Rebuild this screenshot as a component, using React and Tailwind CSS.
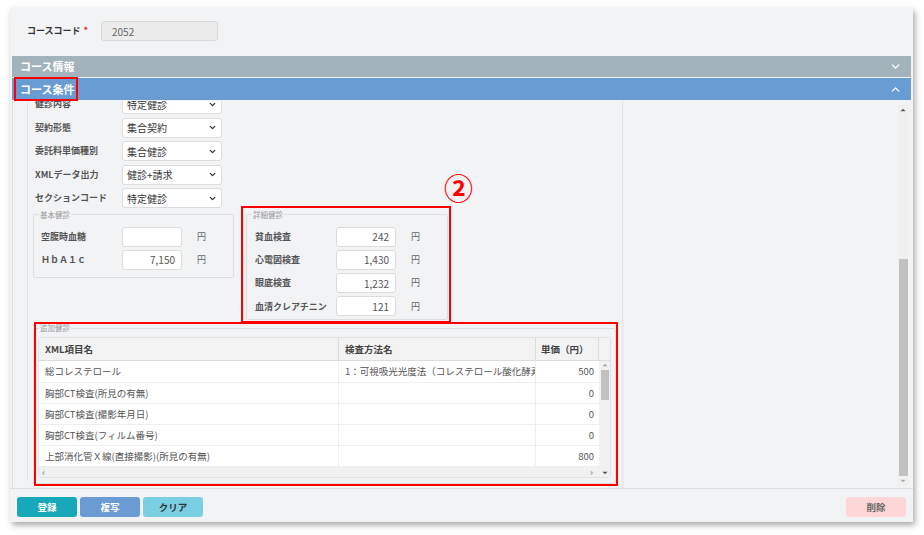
import { ChevronDown, ChevronUp } from "lucide-react";

const rows = [
  { name: "総コレステロール", method: "1：可視吸光光度法（コレステロール酸化酵素法）", price: "500" },
  { name: "胸部CT検査(所見の有無)", method: "", price: "0" },
  { name: "胸部CT検査(撮影年月日)", method: "", price: "0" },
  { name: "胸部CT検査(フィルム番号)", method: "", price: "0" },
  { name: "上部消化管Ｘ線(直接撮影)(所見の有無)", method: "", price: "800" },
];

function Tri({ dir = "up", className = "" }) {
  const pts = {
    up: "0,5 4,1 8,5",
    down: "0,1 4,5 8,1",
    left: "5,0 1,4 5,8",
    right: "1,0 5,4 1,8",
  }[dir];
  const vb = dir === "up" || dir === "down" ? "0 0 8 6" : "0 0 6 8";
  return (
    <svg viewBox={vb} className={className}>
      <polygon points={pts} fill="currentColor" />
    </svg>
  );
}

function Select({ value }) {
  return (
    <div className="flex h-[20px] w-[100px] items-center justify-between rounded-[3px] border border-[#dcdcdc] bg-white pl-[4px] pr-[4px] text-[10px] text-[#333]">
      <span>{value}</span>
      <ChevronDown size={9} strokeWidth={3.5} className="text-[#333]" />
    </div>
  );
}

function Money({ value }) {
  return (
    <div className="flex h-[20px] w-[60px] items-center justify-end rounded-[3px] border border-[#dcdcdc] bg-white pr-[6px] text-[10px] text-[#555]">
      {value}
    </div>
  );
}

function MoneyRow({ label, value }) {
  return (
    <div className="flex h-[20px] items-center">
      <div className="w-[81px] text-[9px] font-bold text-[#555]">{label}</div>
      <Money value={value} />
      <div className="ml-[15px] text-[9px] text-[#666]">円</div>
    </div>
  );
}

function Legend({ children }) {
  return <legend className="ml-[5px] px-[1px] text-[7.5px] leading-[10px] text-[#999]">{children}</legend>;
}

export default function App() {
  return (
    <div className="relative h-[535px] w-[924px] overflow-hidden bg-white font-['Noto_Sans_CJK_JP','Noto_Sans',sans-serif]">
      <div className="ml-[10px] mt-[8px] flex h-[514px] w-[903px] flex-col bg-[#f2f3f5] shadow-[2px_3px_6px_rgba(0,0,0,0.35)]">
        {/* コースコード */}
        <div className="flex h-[48px] items-start pl-[17px] pt-[13px]">
          <div className="flex h-[20px] w-[74px] items-center text-[9px] font-bold text-[#333]">
            コースコード<span className="ml-[3px] text-[#e02020]">*</span>
          </div>
          <div className="flex h-[20px] w-[117px] items-center rounded-[3px] border border-[#d8d8d8] bg-[#ececec] pl-[10px] text-[10px] text-[#666]">
            2052
          </div>
        </div>

        {/* section bars */}
        <div className="mx-[2px] flex h-[21px] items-center justify-between bg-[#a3b3bb] pl-[8px] pr-[9px] text-[11px] font-bold text-white">
          <span>コース情報</span>
          <ChevronDown size={13} strokeWidth={2.5} />
        </div>
        <div className="mx-[2px] mt-[1px] flex h-[22px] items-center justify-between bg-[#6a9cd4] pl-[8px] pr-[9px] text-[11px] font-bold text-white">
          <span>コース条件</span>
          <ChevronUp size={13} strokeWidth={2.5} />
        </div>

        {/* content */}
        <div className="mx-[2px] mt-[1px] flex h-[387px]">
          <div className="w-[611px] overflow-hidden border-l border-r border-[#e0e0e0] pl-[14px]">
            <div className="h-full border-l border-[#e3e3e3] pl-[5px]">
              <div className="-mt-[7px] flex flex-col gap-[3.5px]">
                {[
                  ["健診内容", "特定健診"],
                  ["契約形態", "集合契約"],
                  ["委託料単価種別", "集合健診"],
                  ["XMLデータ出力", "健診+請求"],
                  ["セクションコード", "特定健診"],
                ].map(([l, v]) => (
                  <div key={l} className="flex h-[20px] items-center">
                    <div className="w-[89px] pl-[2px] text-[9px] font-bold text-[#555]">{l}</div>
                    <Select value={v} />
                  </div>
                ))}
              </div>

              <div className="mt-[1.5px] flex items-start gap-[12px]">
                <fieldset className="w-[201px] rounded-[2px] border border-[#dedede] pb-[7px]">
                  <Legend>基本健診</Legend>
                  <div className="flex flex-col gap-[3px] pl-[7px] pt-[7px]">
                    <MoneyRow label="空腹時血糖" value="" />
                    <MoneyRow label="ＨｂＡ１ｃ" value="7,150" />
                  </div>
                </fieldset>
                <fieldset className="w-[202px] rounded-[2px] border border-[#dedede] pb-[3px]">
                  <Legend>詳細健診</Legend>
                  <div className="flex flex-col gap-[3.3px] pl-[8px] pt-[7px]">
                    <MoneyRow label="貧血検査" value="242" />
                    <MoneyRow label="心電図検査" value="1,430" />
                    <MoneyRow label="眼底検査" value="1,232" />
                    <MoneyRow label="血清クレアチニン" value="121" />
                  </div>
                </fieldset>
              </div>

              <fieldset className="mt-[3px] w-[581px] rounded-[2px] border border-[#dedede] pb-[5px]">
                <Legend>追加健診</Legend>
                <div className="mx-[4px] mt-[4px] flex h-[141px] flex-col overflow-hidden rounded-[3px] border border-[#e2e2e2] bg-white text-[9.5px] text-[#555]">
                  <div className="flex h-[23px] shrink-0 border-b border-[#dcdcdc] bg-[#f3f3f3] font-bold text-[#444]">
                    <div className="flex w-[300px] items-center border-r border-[#dcdcdc] pl-[6px]">XML項目名</div>
                    <div className="flex w-[197px] items-center border-r border-[#dcdcdc] pl-[6px]">検査方法名</div>
                    <div className="flex w-[63px] items-center border-r border-[#dcdcdc] pl-[5px]">単価（円）</div>
                    <div className="flex-1" />
                  </div>
                  <div className="flex flex-1">
                    <div className="flex w-[560px] flex-col">
                      {rows.map((r) => (
                        <div key={r.name} className="flex h-[21.2px] border-b border-[#eeeeee]">
                          <div className="flex w-[300px] items-center border-r border-[#eeeeee] pl-[6px]">{r.name}</div>
                          <div className="flex w-[197px] items-center overflow-hidden whitespace-nowrap border-r border-[#eeeeee] pl-[6px]">
                            {r.method}
                          </div>
                          <div className="flex w-[63px] items-center justify-end pr-[5px]">{r.price}</div>
                        </div>
                      ))}
                    </div>
                    <div className="flex w-[11px] flex-col items-center bg-[#f1f1f1]">
                      <Tri dir="up" className="mt-[2px] h-[4px] w-[6px] text-[#aaa]" />
                      <div className="mt-[3px] h-[30px] w-[8px] bg-[#c1c1c1]" />
                    </div>
                  </div>
                  <div className="flex h-[11px] shrink-0 items-center bg-[#f1f1f1]">
                    <Tri dir="left" className="ml-[2px] h-[6px] w-[4px] text-[#bbb]" />
                    <div className="flex-1" />
                    <Tri dir="right" className="mr-[8px] h-[6px] w-[4px] text-[#bbb]" />
                    <Tri dir="down" className="mr-[2px] h-[4px] w-[6px] text-[#555]" />
                  </div>
                </div>
              </fieldset>
            </div>
          </div>

          <div className="flex flex-1 justify-end pr-[3px] pt-[4px]">
            <div className="flex h-[381px] w-[10px] flex-col items-center bg-[#f0f0f0]">
              <Tri dir="up" className="mt-[3px] h-[4px] w-[6px] text-[#555]" />
              <div className="mt-[147px] h-[217px] w-[9px] bg-[#c1c1c1]" />
              <Tri dir="down" className="mt-[3px] h-[4px] w-[6px] text-[#aaa]" />
            </div>
          </div>
        </div>

        {/* footer */}
        <div className="flex flex-1 items-start justify-between border-t border-[#dedede] px-[7px] pt-[8px] text-[9.5px] font-bold">
          <div className="flex gap-[3px]">
            <div className="flex h-[20px] w-[60px] items-center justify-center rounded-[3px] bg-[#17a8ba] text-white">登録</div>
            <div className="flex h-[20px] w-[60px] items-center justify-center rounded-[3px] bg-[#6b9bd3] text-white">複写</div>
            <div className="flex h-[20px] w-[60px] items-center justify-center rounded-[3px] bg-[#7bcfe3] text-[#333]">クリア</div>
          </div>
          <div className="flex h-[20px] w-[60px] items-center justify-center rounded-[3px] bg-[#fdd7d8] text-[#666]">削除</div>
        </div>
      </div>

      {/* annotations */}
      <div className="absolute left-[14px] top-[77px] h-[24px] w-[64px] border-2 border-[#ff0000]" />
      <div className="absolute left-[241px] top-[206px] h-[117px] w-[210px] border-2 border-[#ff0000]" />
      <div className="absolute left-[34px] top-[322px] h-[164px] w-[584px] border-2 border-[#ff0000]" />
      <div className="absolute left-[444px] top-[169px] text-[29px] font-bold leading-[36px] text-[#ff0000]">②</div>
    </div>
  );
}
